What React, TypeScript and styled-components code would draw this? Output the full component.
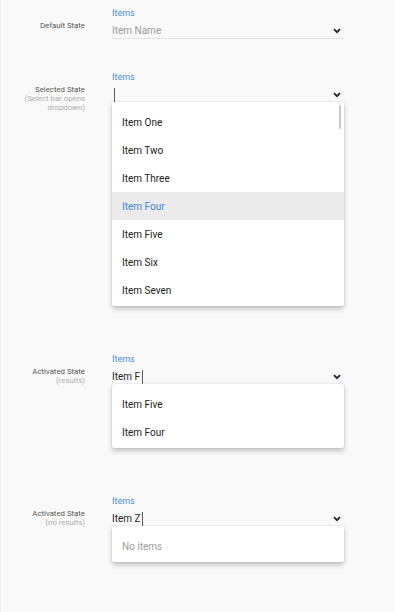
import styled, { createGlobalStyle } from 'styled-components'

const GlobalStyle = createGlobalStyle`
    html, body {
        margin: 0;
        padding: 0;
        background: #f9f9f9;
    }
    body {
        font-family: Roboto, 'Liberation Sans', Arial, sans-serif;
        -webkit-font-smoothing: antialiased;
    }
`

const Page = styled.div`
    min-height: 612px;
    box-sizing: border-box;
    padding-top: 7px;
    background: #f9f9f9;
    border-left: 1px solid #ededed;
    display: flex;
    flex-direction: column;
`

const Section = styled.section<{ $gap: number }>`
    display: grid;
    grid-template-columns: 84px 232px;
    column-gap: 27px;
    margin-top: ${(p) => p.$gap}px;
`

const StateLabel = styled.div`
    padding-top: 13.5px;
    text-align: right;
    font-size: 7.8px;
    line-height: 9px;
    color: #575757;
`

const StateHint = styled.div`
    color: #adadad;
`

const Field = styled.div`
    display: flex;
    flex-direction: column;
`

const FloatLabel = styled.div`
    font-size: 9px;
    line-height: 12px;
    color: #4a8fd8;
`

const InputRow = styled.div<{ $underline?: boolean }>`
    display: flex;
    align-items: center;
    box-sizing: border-box;
    padding-top: 4px;
    border-bottom: ${(p) => (p.$underline ? '1px solid #e3e3e3' : 'none')};
    height: ${(p) => (p.$underline ? 20 : 19)}px;
`

const InputText = styled.div<{ $placeholder?: boolean }>`
    flex: 1;
    display: flex;
    align-items: center;
    font-size: 10px;
    line-height: 14px;
    color: ${(p) => (p.$placeholder ? '#9b9b9b' : '#1f1f1f')};
`

const Caret = styled.span`
    display: inline-block;
    width: 1px;
    height: 14px;
    margin-left: 1.5px;
    background: #5d5d5d;
`

const Chevron = styled.svg`
    width: 8px;
    height: 6px;
    margin-right: 3px;
`

const Menu = styled.div`
    position: relative;
    background: #fff;
    border-radius: 2px;
    padding: 6px 0 2px;
    box-shadow: 0 3px 5px rgba(0, 0, 0, 0.22), 0 0 2px rgba(0, 0, 0, 0.12);
`

const ScrollThumb = styled.div`
    position: absolute;
    top: 3px;
    right: 3px;
    width: 2px;
    height: 24px;
    border-radius: 1px;
    background: #c6c6c6;
`

const MenuItem = styled.div<{ $active?: boolean; $empty?: boolean }>`
    height: 28px;
    display: flex;
    align-items: center;
    padding-left: 10px;
    font-size: 10px;
    color: ${(p) => (p.$empty ? '#9e9e9e' : p.$active ? '#4187d2' : '#222')};
    background: ${(p) => (p.$active ? '#ebebeb' : 'transparent')};
`

const ChevronIcon = () => (
    <Chevron viewBox="0 0 8 6">
        <path
            d="M1 1.2 L4 4.2 L7 1.2"
            fill="none"
            stroke="#1c2a3a"
            strokeWidth="1.9"
        />
    </Chevron>
)

type Props = {
    title: string
    hint?: string[]
    gap: number
    value?: string
    placeholder?: string
    caret?: boolean
    items?: string[]
    active?: string
    scroll?: boolean
    underline?: boolean
}

const SelectDemo = ({
    title,
    hint,
    gap,
    value,
    placeholder,
    caret,
    items,
    active,
    scroll,
    underline,
}: Props) => (
    <Section $gap={gap}>
        <StateLabel>
            {title}
            {hint && hint.map((h) => <StateHint key={h}>{h}</StateHint>)}
        </StateLabel>
        <Field>
            <FloatLabel>Items</FloatLabel>
            <InputRow $underline={underline}>
                <InputText $placeholder={!!placeholder}>
                    {value || placeholder}
                    {caret && <Caret />}
                </InputText>
                <ChevronIcon />
            </InputRow>
            {items && (
                <Menu>
                    {scroll && <ScrollThumb />}
                    {items.length === 0 ? (
                        <MenuItem $empty>No items</MenuItem>
                    ) : (
                        items.map((item) => (
                            <MenuItem key={item} $active={item === active}>
                                {item}
                            </MenuItem>
                        ))
                    )}
                </Menu>
            )}
        </Field>
    </Section>
)

const App = () => (
    <>
        <GlobalStyle />
        <Page>
            <SelectDemo
                title="Default State"
                gap={0}
                placeholder="Item Name"
                underline
            />
            <SelectDemo
                title="Selected State"
                hint={['(Select bar opens', 'dropdown)']}
                gap={32}
                caret
                scroll
                active="Item Four"
                items={[
                    'Item One',
                    'Item Two',
                    'Item Three',
                    'Item Four',
                    'Item Five',
                    'Item Six',
                    'Item Seven',
                ]}
            />
            <SelectDemo
                title="Activated State"
                hint={['(results)']}
                gap={47}
                value="Item F"
                caret
                items={['Item Five', 'Item Four']}
            />
            <SelectDemo
                title="Activated State"
                hint={['(no results)']}
                gap={47}
                value="Item Z"
                caret
                items={[]}
            />
        </Page>
    </>
)

export default App
